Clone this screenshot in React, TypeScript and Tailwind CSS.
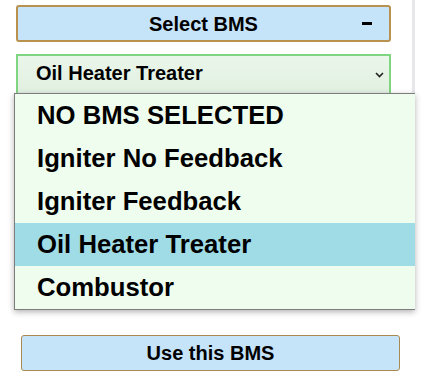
const options = [
  'NO BMS SELECTED',
  'Igniter No Feedback',
  'Igniter Feedback',
  'Oil Heater Treater',
  'Combustor',
];

export default function App() {
  const selected = 'Oil Heater Treater';

  return (
    <div className="relative w-[423px] h-[380px] bg-white font-['Liberation_Sans',Arial,sans-serif] text-black">
      <div className="w-[415px] h-[93px] border-r-[3px] border-[#e7e7eb] pt-[5px] pl-4">
        {/* panel header */}
        <div className="relative w-[375px] h-[37px] flex items-center justify-center rounded-[3px] border-2 border-[#b8924e] bg-[#c5e3f9]">
          <span className="text-[20px] font-bold leading-none">Select BMS</span>
          <span className="absolute right-[17px] top-[15px] w-[10px] h-[3px] bg-black" />
        </div>

        {/* select box */}
        <div className="relative mt-[12px] w-[375px] h-[45px] border-2 border-b-0 border-[#80d680] bg-gradient-to-b from-[#e9f6e9] to-[#e1efe1] pl-[18px] pt-[2px]">
          <span className="text-[20px] font-bold">{selected}</span>
          <svg
            className="absolute right-[5px] top-[16px]"
            width="9"
            height="6"
            viewBox="0 0 9 6"
            fill="none"
            stroke="#222"
            strokeWidth="1.6"
          >
            <path d="M1 1l3.5 3.5L8 1" />
          </svg>
        </div>
      </div>

      {/* dropdown list */}
      <ul className="absolute left-[14px] top-[93px] w-[401px] border border-r-0 border-[#7d7d7d] bg-[#effdef] shadow-[0_2px_6px_rgba(0,0,0,0.3)]">
        {options.map((opt) => (
          <li
            key={opt}
            className={`h-[43px] flex items-center pl-[22px] text-[25.7px] font-bold ${
              opt === selected ? 'bg-[#a0dce6]' : ''
            }`}
          >
            {opt}
          </li>
        ))}
      </ul>

      <button className="ml-[21px] mt-[242px] w-[379px] h-[36px] flex items-center justify-center rounded-[3px] border-[1.5px] border-[#a88a50] bg-[#c5e3f9] text-[20px] font-bold">
        Use this BMS
      </button>
    </div>
  );
}
